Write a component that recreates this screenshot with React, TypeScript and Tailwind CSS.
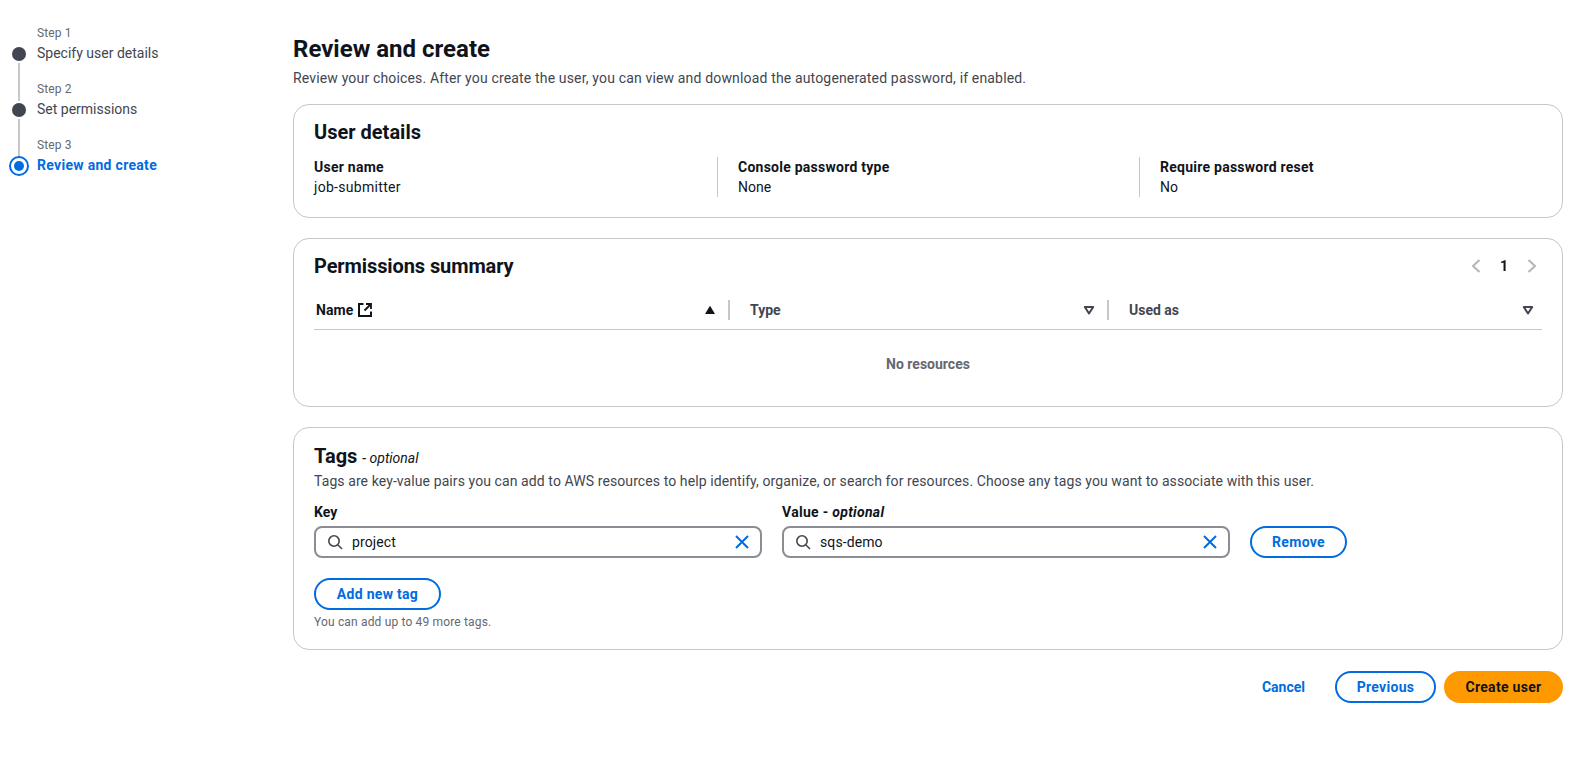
import React from 'react'

const steps = [
  { label: 'Step 1', title: 'Specify user details' },
  { label: 'Step 2', title: 'Set permissions' },
  { label: 'Step 3', title: 'Review and create', active: true },
]

function Stepper() {
  return (
    <div className="w-[293px] shrink-0 pt-[25px] pl-[9px]">
      {steps.map((step, i) => (
        <div key={step.label} className="flex h-[56px]">
          <div className="w-[20px] flex flex-col items-center pt-[22px]">
            {step.active ? (
              <span className="mt-[-3px] w-[20px] h-[20px] rounded-full border-[2.5px] border-[#006ce0] flex items-center justify-center shrink-0">
                <span className="w-[10px] h-[10px] rounded-full bg-[#006ce0]" />
              </span>
            ) : (
              <span className="w-[14px] h-[14px] rounded-full bg-[#424650] shrink-0" />
            )}
            {i < 2 && <span className="w-[2px] mt-[2px] h-[38px] bg-[#c6c6cd] shrink-0" />}
          </div>
          <div className="ml-[8px]">
            <div className="text-[12px] leading-[16px] tracking-[0.1px] text-[#656871]">{step.label}</div>
            <div className={`mt-[2px] text-[14px] leading-[20px] ${step.active ? 'font-bold tracking-[0.3px] text-[#006ce0]' : 'text-[#424650]'}`}>
              {step.title}
            </div>
          </div>
        </div>
      ))}
    </div>
  )
}

function DetailCol({ label, value, first }: { label: string; value: string; first?: boolean }) {
  return (
    <div className={first ? '' : 'border-l border-[#c6c6cd] pl-[20px]'}>
      <div className="text-[14px] leading-[20px] font-bold tracking-[0.25px] text-[#0f141a]">{label}</div>
      <div className={`text-[14px] leading-[20px] text-[#0f141a] ${first ? 'tracking-[0.3px]' : ''}`}>{value}</div>
    </div>
  )
}

function SortIcon({ filled }: { filled?: boolean }) {
  return (
    <svg width="12" height="12" viewBox="0 0 12 12" className="shrink-0">
      {filled ? (
        <path d="M6 1.8 11 10H1z" fill="#0f141a" />
      ) : (
        <path d="M1.8 3h8.4L6 9.5z" fill="none" stroke="#424650" strokeWidth="2" strokeLinejoin="round" />
      )}
    </svg>
  )
}

function ExternalIcon() {
  return (
    <svg width="14" height="14" viewBox="0 0 14 14" className="shrink-0" fill="none" stroke="#0f141a" strokeWidth="2">
      <path d="M5.5 1H1v12h12V8.5" />
      <path d="M8 1h5v5M13 1 6.5 7.5" strokeWidth="1.8" />
    </svg>
  )
}

function SearchInput({ value }: { value: string }) {
  return (
    <div className="h-[32px] flex items-center rounded-[8px] border-[2px] border-[#8c8c94] pl-[11px] pr-[10px]">
      <svg width="16" height="16" viewBox="0 0 16 16" fill="none" stroke="#424650" strokeWidth="1.6" className="shrink-0">
        <circle cx="7" cy="7" r="5.2" />
        <path d="m11 11 4 4" />
      </svg>
      <span className="ml-[9px] flex-1 text-[14px] tracking-[0.1px] text-[#0f141a]">{value}</span>
      <svg width="16" height="16" viewBox="0 0 16 16" fill="none" stroke="#006ce0" strokeWidth="2" className="shrink-0">
        <path d="m2 2 12 12M14 2 2 14" />
      </svg>
    </div>
  )
}

function OutlineButton({ children, className }: { children: React.ReactNode; className: string }) {
  return (
    <button className={`h-[32px] rounded-full border-[2px] border-[#006ce0] text-[14px] font-bold tracking-[0.3px] text-[#006ce0] flex items-center justify-center ${className}`}>
      {children}
    </button>
  )
}

export default function App() {
  return (
    <div className="min-h-[765px] bg-white flex font-['Roboto',sans-serif] text-[#0f141a]">
      <Stepper />
      <div className="flex-1 pr-[22px] pt-[34px]">
        <h1 className="text-[24px] leading-[30px] font-bold">Review and create</h1>
        <p className="mt-[4px] text-[14px] leading-[20px] tracking-[0.16px] text-[#424650]">
          Review your choices. After you create the user, you can view and download the autogenerated password, if enabled.
        </p>

        <section className="mt-[16px] h-[114px] rounded-[16px] border border-[#c6c6cd] px-[20px] pt-[15px]">
          <h2 className="text-[20px] leading-[24px] font-bold">User details</h2>
          <div className="mt-[13px] grid grid-cols-[403px_422px_1fr]">
            <DetailCol first label="User name" value="job-submitter" />
            <DetailCol label="Console password type" value="None" />
            <DetailCol label="Require password reset" value="No" />
          </div>
        </section>

        <section className="mt-[20px] h-[169px] rounded-[16px] border border-[#c6c6cd] px-[20px] pt-[15px]">
          <div className="flex items-center justify-between">
            <h2 className="text-[20px] leading-[24px] font-bold tracking-[-0.1px]">Permissions summary</h2>
            <div className="flex items-center gap-[19px] pr-[5px] text-[#b4b4bb]">
              <svg width="10" height="14" viewBox="0 0 10 14" fill="none" stroke="currentColor" strokeWidth="2"><path d="M8.5 1 2 7l6.5 6" /></svg>
              <span className="text-[14px] font-bold text-[#0f141a]">1</span>
              <svg width="10" height="14" viewBox="0 0 10 14" fill="none" stroke="currentColor" strokeWidth="2"><path d="M1.5 1 8 7l-6.5 6" /></svg>
            </div>
          </div>
          <div className="mt-[22px] h-[30px] border-b border-[#c6c6cd] grid grid-cols-[414px_379px_1fr] text-[14px] font-bold text-[#424650]">
            <div className="h-[20px] flex items-center pl-[2px] pr-[12px]">
              <span className="text-[#0f141a] tracking-[0.1px]">Name</span>
              <span className="ml-[5px]"><ExternalIcon /></span>
              <span className="ml-auto"><SortIcon filled /></span>
            </div>
            <div className="h-[20px] flex items-center border-l-2 border-[#c6c6cd] pl-[20px] pr-[12px]">
              <span>Type</span>
              <span className="ml-auto"><SortIcon /></span>
            </div>
            <div className="h-[20px] flex items-center border-l-2 border-[#c6c6cd] pl-[20px] pr-[8px]">
              <span>Used as</span>
              <span className="ml-auto"><SortIcon /></span>
            </div>
          </div>
          <div className="mt-[24px] text-center text-[14px] leading-[20px] font-bold text-[#656871]">No resources</div>
        </section>

        <section className="mt-[20px] h-[223px] rounded-[16px] border border-[#c6c6cd] px-[20px] pt-[16px]">
          <h2 className="text-[20px] leading-[24px] font-bold">
            Tags <span className="text-[14px] font-normal italic">- optional</span>
          </h2>
          <p className="mt-[1px] text-[14px] leading-[20px] tracking-[0.09px] text-[#424650]">
            Tags are key-value pairs you can add to AWS resources to help identify, organize, or search for resources. Choose any tags you want to associate with this user.
          </p>
          <div className="mt-[11px] flex items-end">
            <div className="w-[448px]">
              <div className="text-[14px] leading-[20px] font-bold mb-[4px]">Key</div>
              <SearchInput value="project" />
            </div>
            <div className="w-[448px] ml-[20px]">
              <div className="text-[14px] leading-[20px] font-bold tracking-[0.3px] mb-[4px]">
                Value - <span className="italic">optional</span>
              </div>
              <SearchInput value="sqs-demo" />
            </div>
            <OutlineButton className="ml-[20px] w-[97px]">Remove</OutlineButton>
          </div>
          <OutlineButton className="mt-[20px] w-[127px]">Add new tag</OutlineButton>
          <p className="mt-[4px] text-[12px] leading-[16px] tracking-[0.16px] text-[#656871]">You can add up to 49 more tags.</p>
        </section>

        <div className="mt-[21px] flex items-center justify-end">
          <button className="text-[14px] font-bold text-[#006ce0] mr-[30px]">Cancel</button>
          <OutlineButton className="w-[101px] mr-[8px]">Previous</OutlineButton>
          <button className="h-[32px] w-[119px] rounded-full bg-[#ff9900] text-[14px] font-bold tracking-[0.3px] text-[#0f141a]">Create user</button>
        </div>
      </div>
    </div>
  )
}
